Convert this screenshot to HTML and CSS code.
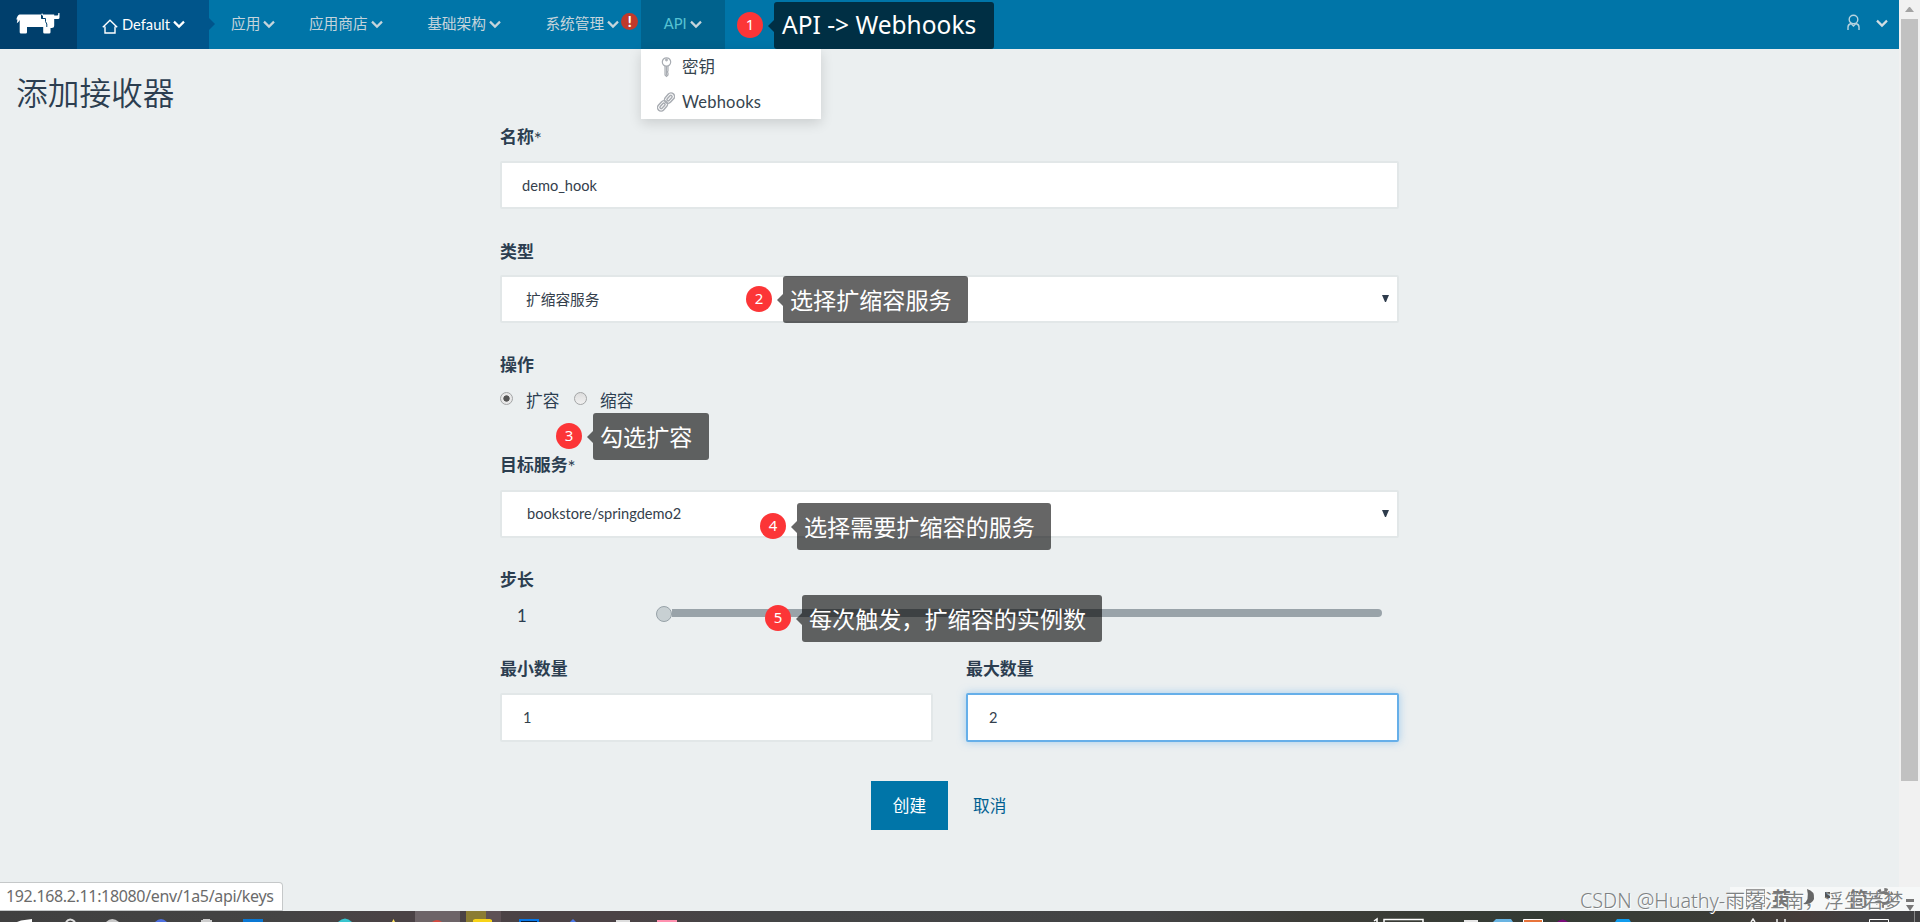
FILE: index.html
```
<!DOCTYPE html>
<html lang="zh-CN">
<head>
<meta charset="utf-8">
<title>添加接收器</title>
<link rel="stylesheet" href="styles.css">
</head>
<body>
<svg class="defs" width="0" height="0">
  <symbol id="chev" viewBox="0 0 12 9"><path d="M1 1.600 L6 6.600 L11 1.600" fill="none" stroke="currentColor" stroke-width="2.200"/></symbol>
</svg>
<div class="screen">
  <div class="viewport">
    <header class="bar">
      <div class="logo">
        <svg width="44" height="21" viewBox="0 0 44 21" fill="#fff"><path d="M3.500 1.500H25V4.500Q25 6 27 5.500V1.500H38.200V12.500Q38.200 15 35.500 15H34.500V19.200Q34.500 20.500 33.200 20.500H28.500Q27.200 20.500 27.200 19.200V14H11V19.200Q11 20.500 9.700 20.500H5Q3.700 20.500 3.700 19.200V7Q3 9 .8 10.200Q1.200 8.500 1.400 6.500L.3 6.500Q1.500 2 3.500 1.500Z"/><path d="M26 0L27.500 2.500H25Z"/><path d="M38 2.500H41.500Q42.500 2 42.300 0H43.500V4.500Q43.500 6 42 6H38Z"/><path d="M25.500 2V5.500H29.500V8.500L30.800 11V14" fill="none" stroke="#003f6c" stroke-width="1"/></svg>
      </div>
      <div class="env">
        <svg width="16" height="15" viewBox="0 0 16 15" fill="none" stroke="#fff" stroke-width="1.4"><path d="M.8 8.300L8 1.300L15.200 8.300M3 7.500V14H13V7.500"/></svg>
        <span class="env-name">Default</span>
        <svg class="chev"><use href="#chev"/></svg>
      </div>
      <nav class="nav">
        <a class="n1"><span>应用</span><svg class="chev"><use href="#chev"/></svg></a>
        <a class="n2"><span>应用商店</span><svg class="chev"><use href="#chev"/></svg></a>
        <a class="n3"><span>基础架构</span><svg class="chev"><use href="#chev"/></svg></a>
        <a class="n4"><span>系统管理</span><svg class="chev"><use href="#chev"/></svg><b class="alert">!</b></a>
        <a class="n5"><span>API</span><svg class="chev"><use href="#chev"/></svg></a>
      </nav>
      <div class="user">
        <svg width="14" height="18" viewBox="0 0 14 18" fill="none" stroke="#b7d3df" stroke-width="1.4"><circle cx="6.500" cy="5.500" r="4.300"/><path d="M1 16V13Q1 10.500 4 9.500M12 16V13Q12 10.500 9 9.500M4 9.500L6.500 12L9 9.500"/></svg>
        <svg class="chev"><use href="#chev"/></svg>
      </div>
    </header>
    <main>
      <h1>添加接收器</h1>
      <form class="form">
        <label class="tight">名称<sup>*</sup></label>
        <div class="field">demo_hook</div>
        <label>类型</label>
        <div class="field select cjk"><span>扩缩容服务</span><i class="tri"></i></div>
        <label class="tight">操作</label>
        <div class="radios"><i class="radio on"></i><span class="r1">扩容</span><i class="radio"></i><span class="r2">缩容</span></div>
        <label>目标服务<sup>*</sup></label>
        <div class="field select svc"><span>bookstore/springdemo2</span><i class="tri"></i></div>
        <label>步长</label>
        <div class="slider"><span class="val">1</span><i class="thumb"></i><i class="track"></i></div>
        <div class="pair">
          <div><label>最小数量</label><div class="field">1</div></div>
          <div><label>最大数量</label><div class="field focus">2</div></div>
        </div>
        <div class="actions"><span class="create">创建</span><a>取消</a></div>
      </form>
    </main>
  </div>
  <div class="scroll"><i class="up"></i><i class="bar-thumb"></i></div>
</div>

<div class="menu">
  <div><svg width="18" height="22" viewBox="0 0 18 22" fill="none" stroke="#a9adb3" stroke-width="1.200"><circle cx="9.500" cy="6" r="4.200"/><circle cx="9.500" cy="4" r=".8"/><path d="M8 10V19L9.500 20.500L11 19V17L10.300 16L11 15V10M9.500 10V19"/></svg><span class="key">密钥</span></div>
  <div><svg width="18" height="20" viewBox="0 0 18 20" fill="none" stroke="#a9adb3" stroke-width="1.500"><g transform="rotate(42 9 10)"><rect x="5.500" y="-1" width="7" height="11.500" rx="3.500"/><rect x="7.800" y="1.500" width="2.400" height="6.500" rx="1.200"/><rect x="5.500" y="9.500" width="7" height="11.500" rx="3.500"/><rect x="7.800" y="12" width="2.400" height="6.500" rx="1.200"/></g></svg><span class="hooks">Webhooks</span></div>
</div>

<div class="note a1"><b>1</b><span>API -&gt; Webhooks</span></div>
<div class="note a2"><b>2</b><span>选择扩缩容服务</span></div>
<div class="note a3"><b>3</b><span>勾选扩容</span></div>
<div class="note a4"><b>4</b><span>选择需要扩缩容的服务</span></div>
<div class="note a5"><b>5</b><span>每次触发，扩缩容的实例数</span></div>

<div class="status">192.168.2.11:18080/env/1a5/api/keys</div>
<div class="taskbar">
  <svg width="1920" height="11" viewBox="0 0 1920 11">
    <path d="M17 11L21 9.500L32 8V11Z" fill="#fff"/>
    <path d="M66 11Q70 6 75 11" fill="none" stroke="#ddd" stroke-width="2"/>
    <path d="M106 11Q112 5 119 11Z" fill="#c9c9c9"/>
    <path d="M155 11Q161 5 167 11Z" fill="#4d6fe0"/>
    <path d="M201 9H203V8H210V9H212V11H201Z" fill="#ccc"/>
    <rect x="243" y="8" width="20" height="3" fill="#0a78d4"/>
    <path d="M338 11Q345 4 352 11Z" fill="#38c5cf"/>
    <path d="M392 11L393.500 8L395 11Z" fill="#ffe45c"/>
    <rect x="415" width="45" height="11" fill="#6d6468"/>
    <path d="M432 11Q437 7 442 11Z" fill="#d54a40"/>
    <rect x="466" width="20" height="11" fill="#8b7c33"/><rect x="486" width="15" height="11" fill="#5e5155"/>
    <path d="M473 11V9L475 8H490L492 9V11Z" fill="#f8d317"/>
    <path d="M520 11V9H538V11" fill="#071b35" stroke="#0878e8" stroke-width="2"/>
    <path d="M570 11L573 8L576 11Z" fill="#4c78e8"/>
    <rect x="616" y="9" width="14" height="2" fill="#ddd"/>
    <rect x="657" y="9" width="20" height="2" fill="#ff91af"/>
    <path d="M1374 10L1377 8V11" fill="none" stroke="#fff" stroke-width="1.500"/>
    <path d="M1384 11V8.500H1423V11" fill="none" stroke="#fff" stroke-width="1.500"/>
    <rect x="1464" y="9" width="14" height="2" fill="#e6e6e6"/>
    <path d="M1493 11L1496 8H1511L1513 11Z" fill="#69b4e2"/>
    <path d="M1523.500 11V8.500H1542.500V11" fill="#e8743b" stroke="#fff"/>
    <path d="M1557 11Q1562.500 6 1568 11Z" fill="#7b0b7b"/>
    <path d="M1615 11L1617 8H1629L1631 11Z" fill="#109cee"/>
    <path d="M1751 11L1753 8L1755 11M1777 8V11M1785 8V11" fill="none" stroke="#eee" stroke-width="1.500"/>
    <path d="M1869.500 11V8.500H1888.500V11" fill="none" stroke="#fff"/>
    <path d="M1914.500 0V11" stroke="#888"/>
  </svg>
</div>
<div class="ime"><span class="grid"></span><span class="g1">英</span><span class="moon"><svg width="16" height="18" viewBox="0 0 16 18"><path d="M7 1Q15 3 14 11Q12 17 3 16Q10 13 7 1Z" fill="#666"/></svg></span><span class="quote"></span><span class="g2">简</span><span class="gear"><svg width="22" height="22" viewBox="0 0 22 22" fill="none" stroke="#777"><circle cx="11" cy="11" r="5.500" stroke-width="3"/><circle cx="11" cy="11" r="8.500" stroke-width="3" stroke-dasharray="3.340 3.340"/></svg></span><i class="opt"></i></div>
<div class="mark">CSDN @Huathy-雨落江南，浮生若梦</div>
</body>
</html>
```
FILE: styles.css
```
* { box-sizing: border-box; }
body { margin: 0; font-family: Lato, "Noto Sans CJK SC", sans-serif; color: #2c3e50; background: #ebeff0; overflow: hidden; }
i { font-style: normal; }
.defs { position: absolute; }
.screen { display: flex; height: 922px; }
.viewport { width: 1899px; }
.chev { width: 12px; height: 9px; flex: none; }

/* top navigation */
.bar { display: flex; height: 49px; background: #0075a8; color: #c5d4db; }
.logo { width: 77px; background: #003f6c; padding: 13px 0 0 16px; }
.env { position: relative; width: 132px; background: #00558b; display: flex; align-items: center; padding-left: 25px; color: #fff; }
.env svg:first-child { margin-top: 3px; }
.env-name { font-size: 14.700px; margin: -2px 3px 0 4px; width: 48px; white-space: nowrap; }
.env::after { content: ""; position: absolute; left: 132px; top: 18px; border: 6px solid transparent; border-left-color: #00558b; border-right: 0; }
.nav { display: flex; font-size: 14.700px; line-height: 46px; }
.nav a { display: flex; white-space: nowrap; }
.nav .chev { margin: 20px 0 0 3px; }
.n1 { margin-left: 22px; }
.n2 { margin-left: 33.500px; }
.n3 { margin-left: 44.500px; }
.n4 { margin-left: 44.500px; }
.alert { width: 17px; height: 17px; margin: 13px 0 0 2px; border-radius: 50%; background: #c0392b; color: #fff; font-size: 16px; line-height: 16px; text-align: center; }
.n5 { width: 84px; height: 49px; margin-left: 2.500px; padding-left: 23px; background: #00628d; color: #57c3d3; }
.n5 span { width: 23px; }
.n5 .chev { color: #c5d4db; }
.user { margin-left: auto; display: flex; padding: 14px 11px 0 0; color: #d2dde2; }
.user .chev { margin: 5px 0 0 15px; }

/* page */
h1 { margin: 0; padding: 21px 0 0 16px; height: 77px; font-size: 31.700px; line-height: 46px; font-weight: 350; }
.form { width: 899px; margin-left: 500px; }
label { display: block; height: 24px; margin-bottom: 11px; font-size: 16.900px; line-height: 24px; font-weight: 700; }
.tight { line-height: 22px; }
sup { font-size: 19px; line-height: 0; font-weight: 400; vertical-align: -3px; }
.field { height: 48px; margin-bottom: 31px; border: 2px solid #e2e7e8; border-radius: 2px; background: #fff; padding-left: 20px; font-size: 14.600px; line-height: 46px; color: #34404c; }
.select { display: flex; justify-content: space-between; padding: 0 8px 0 25px; }
.cjk { padding-left: 24px; font-size: 14.700px; line-height: 44px; }
.svc { margin-top: 13px; margin-bottom: 30px; line-height: 44px; }
.tri { width: 7px; height: 7px; margin-top: 18px; background: #2e3c4c; clip-path: polygon(0 0, 100% 0, 57% 100%, 43% 100%); }
.radios { display: flex; height: 24px; margin: 0 0 40px; font-size: 16.700px; line-height: 24px; }
.radio { width: 13px; height: 13px; margin-top: 3px; border: 1px solid #a3a5a6; border-radius: 50%; background: linear-gradient(#ddd, #f0f0f0); }
.radio.on { background: radial-gradient(circle, #555 0 2.800px, #e8e8e8 3.500px); }
.r1 { width: 48px; margin-left: 13px; }
.r2 { margin-left: 13px; }
.slider { display: flex; height: 24px; margin-bottom: 30px; }
.val { width: 156px; padding-left: 17px; font-size: 16.700px; line-height: 26px; }
.thumb { width: 16px; height: 16px; margin-top: 3px; border: 1px solid #97a2a8; border-radius: 50%; background: #c8d0d3; }
.track { width: 710px; height: 8px; margin-top: 6px; border-radius: 0 4px 4px 0; background: #99a3a9; }
.pair { display: flex; gap: 33px; }
.pair > div { flex: 1; }
.pair label { margin-bottom: 12px; }
.pair .field { height: 49px; padding-left: 21px; line-height: 45px; margin-bottom: 39px; }
.pair .focus { border-color: #66afe9; box-shadow: 0 0 9px rgba(102,175,233,.55); }
.actions { display: flex; margin-left: 371px; font-size: 16.700px; line-height: 50px; color: #005f91; }
.create { width: 77px; height: 49px; background: #0075a8; color: #fff; text-align: center; margin-right: 25px; }

/* page scrollbar */
.scroll { width: 21px; background: #f1f1f1; padding: 7px 2px; }
.up { display: block; margin: 0 4px 7px; border: 4.500px solid transparent; border-top: 0; border-bottom: 5px solid #a3a3a3; width: 9px; }
.bar-thumb { display: block; width: 17px; height: 762px; background: #c1c1c1; }

/* API dropdown */
.menu { position: absolute; left: 641px; top: 49px; width: 180px; height: 70px; background: #fff; box-shadow: 0 4px 12px rgba(0,0,0,.14); font-size: 16.500px; color: #36454f; }
.menu div { display: flex; align-items: center; height: 35px; padding-left: 16px; gap: 7px; }
.key { margin-top: -2px; }
.hooks { letter-spacing: .2px; }

/* numbered callouts */
.note { position: absolute; height: 47px; display: flex; font-family: "Noto Sans", "Noto Sans CJK SC", sans-serif; color: #fff; }
.note b { width: 26px; height: 26px; margin: 10px 11px 0 0; border-radius: 50%; background: #fc3537; font: 15px/24px "Noto Sans", sans-serif; text-align: center; }
.note span { position: relative; border-radius: 3px; background: rgba(0,0,0,.6); padding-left: 7px; font-size: 23.100px; line-height: 48px; white-space: nowrap; }
.note span::before { content: ""; position: absolute; left: -6px; top: 18px; border: 6px solid transparent; border-right-color: rgba(0,0,0,.6); border-left: 0; }
.a1 { left: 737px; top: 2px; }
.a1 span { width: 220px; background: #002f44; font-size: 24.500px; line-height: 46px; padding-left: 8px; }
.a1 span::before { border-right-color: #002f44; }
.a2 { left: 746px; top: 276px; }
.a2 span { width: 185px; }
.a3 { left: 556px; top: 413px; }
.a3 span { width: 116px; }
.a4 { left: 760px; top: 503px; }
.a4 span { width: 254px; }
.a5 { left: 765px; top: 595px; }
.a5 span { width: 300px; }

/* browser status, taskbar and overlays */
.status { position: absolute; left: 0; top: 882px; width: 283px; height: 29px; padding-left: 6px; border: 1px solid #c5c8c9; border-left: 0; border-radius: 0 4px 0 0; background: #fff; color: #6b6b6b; font: 16px/27px "Noto Sans", sans-serif; letter-spacing: -.34px; white-space: nowrap; }
.taskbar { position: absolute; left: 0; top: 911px; width: 1920px; height: 11px; background: linear-gradient(90deg, #404040 0, #444 15%, #4a4245 20%, #4b4245 32%, #444546 40%, #434445 60%, #3d3d38 68%, #343b34 80%, #3c3d38 90%, #463c3a 94%, #3f3f41 97%); }
.taskbar svg { display: block; }
.ime { position: absolute; left: 1730px; top: 887px; width: 190px; height: 24px; background: #f6f8f8; color: #777; font: 700 19px/22px "Noto Sans CJK SC", sans-serif; }
.ime > * { position: absolute; top: 0; }
.ime .grid { left: 16px; width: 19px; height: 18px; top: 2px; border: 1px solid #999; background: repeating-linear-gradient(#bbb 0 1px, transparent 1px 5px); }
.ime .g1 { left: 42px; }
.moon { left: 70px; }
.ime .quote { left: 95px; top: 5px; width: 5px; height: 6px; background: #555; }
.ime .g2 { left: 119px; }
.ime .gear { left: 143px; }
.ime .opt { left: 176px; top: 12px; width: 8px; height: 3px; background: #777; }
.opt::after { content: ""; position: absolute; top: 6px; border: 4px solid transparent; border-top: 6px solid #777; border-bottom: 0; }
.mark { position: absolute; left: 1580px; top: 888px; font: 350 19.800px/26px "Noto Sans", "Noto Sans CJK SC", sans-serif; color: #7e8283; text-shadow: 1px 1px 0 #fff; white-space: nowrap; }
```
